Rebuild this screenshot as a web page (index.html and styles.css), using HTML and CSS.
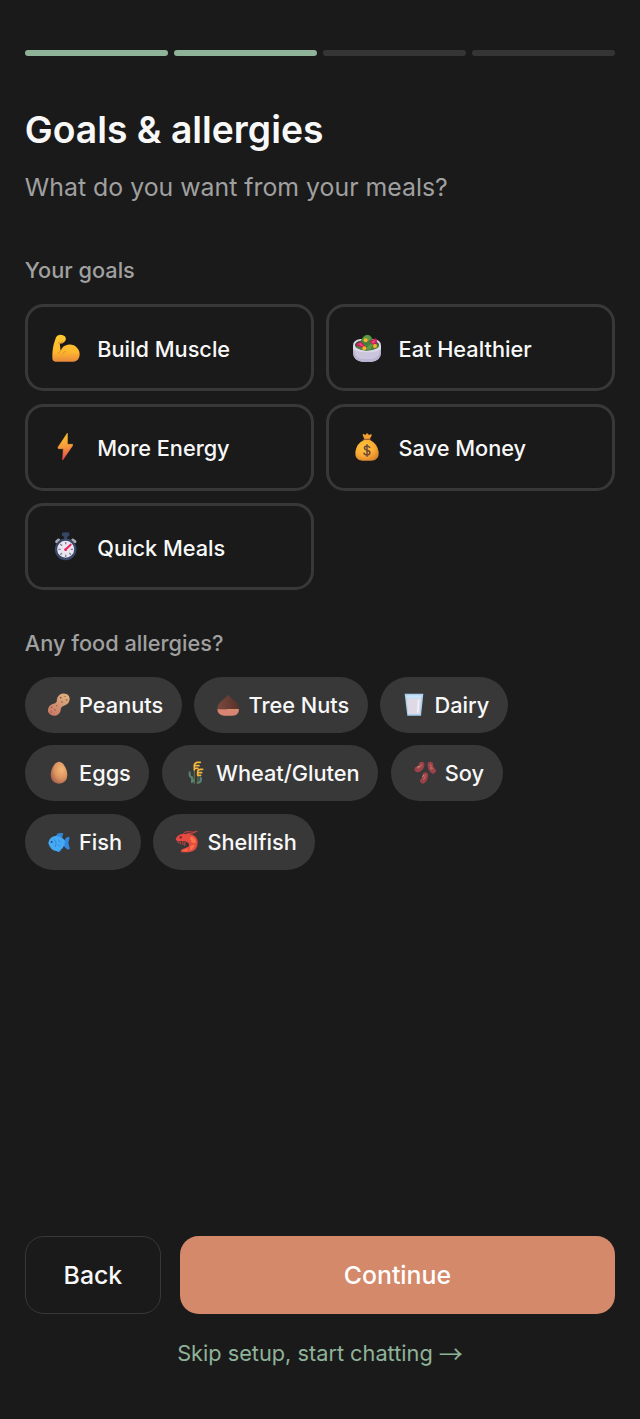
FILE: index.html
```html
<!DOCTYPE html>
<html lang="en">
<head>
<meta charset="utf-8">
<title>Goals &amp; allergies</title>
<link rel="stylesheet" href="styles.css">
</head>
<body>
<main class="screen">
  <div class="progress"><span class="step done"></span><span class="step done"></span><span class="step"></span><span class="step"></span></div>
  <h1 class="title">Goals &amp; allergies</h1>
  <p class="subtitle">What do you want from your meals?</p>

  <h2 class="label">Your goals</h2>
  <div class="goals">
    <button class="goal"><span class="goal-icon"><svg viewBox="33 24 90 90">
      <defs><linearGradient id="gold" x1="0" y1="0" x2="0" y2="1"><stop offset="0" stop-color="#ffc931"/><stop offset=".65" stop-color="#fdb72d"/><stop offset="1" stop-color="#e8873c"/></linearGradient></defs>
      <path fill="url(#gold)" d="M52 32q8-5 17-1q8 2 9 10q-1 9-9 13q-6 3-10 0l3 23q6-16 21-18q17-3 28 9q11 12 7 27q-4 14-18 15H46q-9-1-9-11q-1-30 9-56q1-7 6-11z"/>
      <path fill="none" stroke="#df8730" stroke-width="2.5" d="M54 53q8 4 15-3M62 76q-2 8-9 9M78 79q-8 1-11 9"/></svg></span><span class="goal-name">Build Muscle</span></button>
    <button class="goal"><span class="goal-icon"><svg viewBox="36 24 90 90">
      <path fill="#dcd8e8" d="M39 62q0-17 22-20h40q22 3 22 20v17q0 29-28 31H67q-28-2-28-31z"/>
      <path fill="#bcb5d2" d="M39 72q10 12 42 12t42-12v10q-1 26-28 28H67q-27-2-28-28z"/>
      <path fill="#cbc5dd" d="M43 74q12 8 38 8t38-8q-1 26-24 28H67q-23-2-24-28z"/>
      <ellipse cx="81" cy="60" rx="36" ry="16" fill="#31503a"/>
      <path fill="#477f3b" d="M50 67q-2-12 11-15q5-20 20-23q12 1 15 10q2 10 16 17q9 8-2 14q-12 7-31 7q-21-1-29-10z"/>
      <path fill="#c71d58" d="M48 57l16-7 13 15-7 4-20-7zM88 49l19-9 4 5-2 12-9 4z"/>
      <path fill="#ee4778" d="M54 56l9-2 8 10h-6zM94 50l11-5 1 6-8 5z"/>
      <path fill="#609943" d="M68 42q5-12 15-11q10 3 10 11l-9 7-8-5-8 6zM82 66q7-12 17-8l-6 13-13 5z"/>
      <g fill="#ffb22e"><circle cx="77" cy="46" r="6"/><circle cx="73" cy="70" r="6"/><circle cx="105" cy="63" r="6"/></g></svg></span><span class="goal-name">Eat Healthier</span></button>
    <button class="goal"><span class="goal-icon"><svg viewBox="33 31 90 90">
      <defs><linearGradient id="bolt" x1=".4" y1="0" x2=".5" y2="1"><stop offset="0" stop-color="#ffc52b"/><stop offset=".5" stop-color="#f79a3c"/><stop offset="1" stop-color="#e7404e"/></linearGradient></defs>
      <path fill="url(#bolt)" stroke="url(#bolt)" stroke-width="2" stroke-linejoin="round" d="M82 35L54 77l1 4h15l-2 34 29-42 1-5H82z"/></svg></span><span class="goal-name">More Energy</span></button>
    <button class="goal"><span class="goal-icon"><svg viewBox="36 31 90 90">
      <defs><radialGradient id="bag" cx=".4" cy=".35" r=".7"><stop offset="0" stop-color="#ffc53b"/><stop offset=".6" stop-color="#faab34"/><stop offset="1" stop-color="#dc842c"/></radialGradient></defs>
      <path fill="#f3a12f" d="M69 36l7 4 5-6 6 6 7-3 1 5-6 10H73l-5-12z"/>
      <path fill="url(#bag)" d="M73 54h16q24 12 27 37q2 24-21 26H67q-23-2-21-26q3-26 27-37z"/>
      <path fill="none" stroke="#a65b2e" stroke-width="4" stroke-linecap="round" d="M72 53h18"/>
      <path fill="none" stroke="#70483b" stroke-width="4.5" d="M90 79q-3-7-10-6q-7 1-7 6c0 8 17 5 17 14q-1 7-9 7q-8 0-10-7M81 68v37"/></svg></span><span class="goal-name">Save Money</span></button>
    <button class="goal"><span class="goal-icon"><svg viewBox="33 29 90 90">
      <path fill="#354666" d="M66 31q11-2 22 0v9l-6 3v9H72v-9l-6-3z"/>
      <path stroke="#a8abb4" stroke-width="9" stroke-linecap="round" d="M50 58l6-5M98 53l7 5"/>
      <circle cx="77" cy="81" r="29" fill="#e9e6f1" stroke="#3b4968" stroke-width="7"/>
      <path fill="none" stroke="#837f98" stroke-width="4" d="M77 59v7M77 97v7M55 81h7M92 81h7M61 65l5 5M61 97l5-5M93 97l-5-5"/>
      <path fill="none" stroke="#ed245c" stroke-width="6" stroke-linecap="round" d="M76 82l16-15"/><circle cx="77" cy="82" r="4" fill="#ed245c"/></svg></span><span class="goal-name">Quick Meals</span></button>
  </div>

  <h2 class="label allergy-label">Any food allergies?</h2>
  <div class="chips">
    <button class="chip"><span class="chip-icon"><svg viewBox="80 70 72 72">
      <defs><linearGradient id="nut" x1=".8" y1="0" x2=".2" y2="1"><stop offset="0" stop-color="#dfb180"/><stop offset="1" stop-color="#ca7866"/></linearGradient></defs>
      <path fill="url(#nut)" d="M112 82q8-12 22-10q14 2 14 16q-1 14-14 19q-9 3-12 8q-1 19-16 23q-17 1-23-12q-2-17 14-23q9-1 12-7q0-8 3-14z"/>
      <g fill="#8e594b"><circle cx="121" cy="84" r="2.5"/><circle cx="134" cy="80" r="2"/><circle cx="139" cy="91" r="2.5"/><circle cx="125" cy="97" r="2.5"/><circle cx="109" cy="108" r="2"/><circle cx="94" cy="113" r="2.5"/><circle cx="104" cy="121" r="2.5"/><circle cx="92" cy="127" r="2"/></g></svg></span>Peanuts</button>
    <button class="chip"><span class="chip-icon"><svg viewBox="588 70 72 72">
      <defs><linearGradient id="shell" x1="0" y1="0" x2="1" y2="0"><stop offset="0" stop-color="#7c483d"/><stop offset="1" stop-color="#56322b"/></linearGradient></defs>
      <path fill="url(#shell)" d="M592 120q-1-14 13-27q13-8 19-18q7 10 20 18q14 13 13 27z"/>
      <path fill="#d88673" d="M592 119h65q0 19-20 19h-25q-19-1-20-19z"/><path stroke="#f0a46c" stroke-width="2" d="M622 120h34"/></svg></span>Tree Nuts</button>
    <button class="chip"><span class="chip-icon"><svg viewBox="96 70 72 72">
      <path fill="#acd0ee" d="M104 72h56l-7 66h-41z"/><path fill="#ded9e5" d="M110 86h44l-5 47h-34z"/><path fill="#c6e5fa" d="M109 77h46l-1 9h-44z"/><path stroke="#f0f2fa" stroke-width="5" d="M146 89l-3 40"/></svg></span>Dairy</button>
    <button class="chip"><span class="chip-icon"><svg viewBox="80 64 72 72">
      <defs><radialGradient id="egg" cx=".65" cy=".35" r=".75"><stop offset="0" stop-color="#f4b778"/><stop offset=".55" stop-color="#dc945f"/><stop offset="1" stop-color="#a45b4c"/></radialGradient></defs>
      <path fill="url(#egg)" d="M116 66c14 0 25 25 25 40q-1 25-25 26q-24-1-25-26c0-16 12-40 25-40z"/></svg></span>Eggs</button>
    <button class="chip"><span class="chip-icon"><svg viewBox="490 64 72 72">
      <g fill="none" stroke-linecap="round"><path stroke="#596c45" stroke-width="4" d="M521 91v40M532 105v25"/><path stroke="#5b8270" stroke-width="6" d="M507 98q-2 12 6 16l6 10M540 114v8q-1 7-9 7M514 113v15"/><path stroke="#f3b63e" stroke-width="5" d="M521 91V76q1-6 8-8h10M523 78h12M523 86h9M531 106V95q1-5 8-6h7M532 99h11M531 107h9"/><path stroke="#4b82a7" stroke-width="4" d="M541 116v7"/></g></svg></span>Wheat/Gluten</button>
    <button class="chip"><span class="chip-icon"><svg viewBox="97 64 72 72">
      <g fill="none" stroke-linecap="round"><path stroke="#9b4248" stroke-width="17" d="M110 89q11 0 13-14M149 75q0 10 8 18M134 106q-1 12-7 17"/><path stroke="#bd6260" stroke-width="4" d="M113 85q7-2 9-9M149 75q2 8 7 12M134 106q-1 8-5 12"/><path stroke="#d6a186" stroke-width="2.5" d="M110 82l5-2M149 85l3 3M126 111l3-4"/></g></svg></span>Soy</button>
    <button class="chip"><span class="chip-icon"><svg viewBox="80 68 72 72">
      <path fill="#3188df" d="M107 86l4-7q7-3 18-1l-4 13zM127 104l12-14q8-3 9 1l-4 15 4 17q-1 6-9 2l-12-12zM108 126l17-3-7 11h-7z"/>
      <path fill="#46a9f3" d="M84 107q2-19 24-22q22 2 26 19q-2 22-23 28q-22-3-27-25z"/>
      <path fill="none" stroke="#2f82da" stroke-width="2.5" d="M102 96q9 9 3 23M114 99q5 2 7 7M112 112q4 1 6 5"/><circle cx="94" cy="104" r="3" fill="#244d8b"/></svg></span>Fish</button>
    <button class="chip"><span class="chip-icon"><svg viewBox="466 67 72 72">
      <path fill="#e84a42" d="M468 96q3-17 25-17h16q22 2 25 23q1 29-27 32h-22q-4-4 2-9l16-6q9-4 4-12q-6-7-19-7h-15z"/>
      <path fill="#f57544" d="M515 86q15 7 13 21l-12-2q0-8-6-12zM512 115l13-5q-2 13-14 19zM488 130l17-8-3 9z"/>
      <path fill="none" stroke="#d5423c" stroke-width="3" stroke-linecap="round" d="M491 78q2-7 14-6q15 4 27-1M502 78q16 2 25-4M474 101l3 5M481 102l2 7M489 102l1 9M496 104l-1 9"/><circle cx="483" cy="89" r="3.5" fill="#64282f"/></svg></span>Shellfish</button>
  </div>

  <footer class="footer">
    <div class="actions"><button class="back">Back</button><button class="continue">Continue</button></div>
    <a class="skip">Skip setup, start chatting <span class="arrow">→</span></a>
  </footer>
</main>
</body>
</html>
```
FILE: styles.css
```css
* { box-sizing: border-box; }
html { font-size: 24.854px; }
body { margin: 0; background: #1a1a1a; color: #f8f8f8; font-family: Inter, "Noto Sans", sans-serif; }
button { margin: 0; font-family: inherit; color: inherit; background: none; border: 0; }
svg { display: block; flex: none; overflow: visible; }

.screen { min-height: 1419px; padding: 2rem 1rem; display: flex; flex-direction: column; }
.progress { display: flex; gap: .25rem; margin-bottom: 2rem; }
.step { flex: 1; height: .25rem; border-radius: 1rem; background: #353535; }
.step.done { background: #8fb399; }

.title { margin: 0 0 .57rem; font-size: 1.5rem; line-height: 1.97rem; font-weight: 600; }
.subtitle { margin: 0 0 1.96rem; font-size: 1rem; line-height: 1.5rem; color: #a0a0a0; }
.label { margin: 0 0 .75rem; font-size: .875rem; line-height: 1.25rem; font-weight: 500; color: #a0a0a0; }
.allergy-label { margin: 1.53rem 0 .715rem; }

.goals { display: grid; grid-template-columns: 1fr 1fr; gap: .5rem; }
.goal { display: flex; align-items: center; gap: .5rem; height: 3.5rem; padding: 0 .75rem; border: 3px solid #383838; border-radius: .75rem; font-size: .875rem; font-weight: 500; }
.goal-icon { display: flex; justify-content: center; width: 38.3px; }
.goal-icon svg { width: 30px; height: 30px; }
.goal-name { padding-top: 2px; }

.chips { display: flex; flex-wrap: wrap; gap: .5rem; }
.chip { display: flex; align-items: center; gap: 5px; height: 2.25rem; padding: 0 .75rem; border-radius: 2rem; background: #383838; font-size: .875rem; font-weight: 500; }
.chip-icon { display: flex; justify-content: center; width: 30.6px; }
.chip-icon svg { width: 24px; height: 24px; }

.footer { margin-top: auto; display: flex; flex-direction: column; align-items: center; }
.actions { display: flex; align-self: stretch; gap: .75rem; margin-bottom: .98rem; }
.back, .continue { height: 3.125rem; border-radius: .75rem; font-size: 1rem; font-weight: 500; }
.back { padding: 0 1.52rem; border: 1.5px solid #383838; }
.continue { flex: 1; background: #d4896a; color: #fff; }
.skip { font-size: .875rem; line-height: 1.25rem; color: #8fb399; }
.arrow { font-family: "Noto Sans CJK SC", sans-serif; font-size: 24px; line-height: 1; vertical-align: -2px; }
```
